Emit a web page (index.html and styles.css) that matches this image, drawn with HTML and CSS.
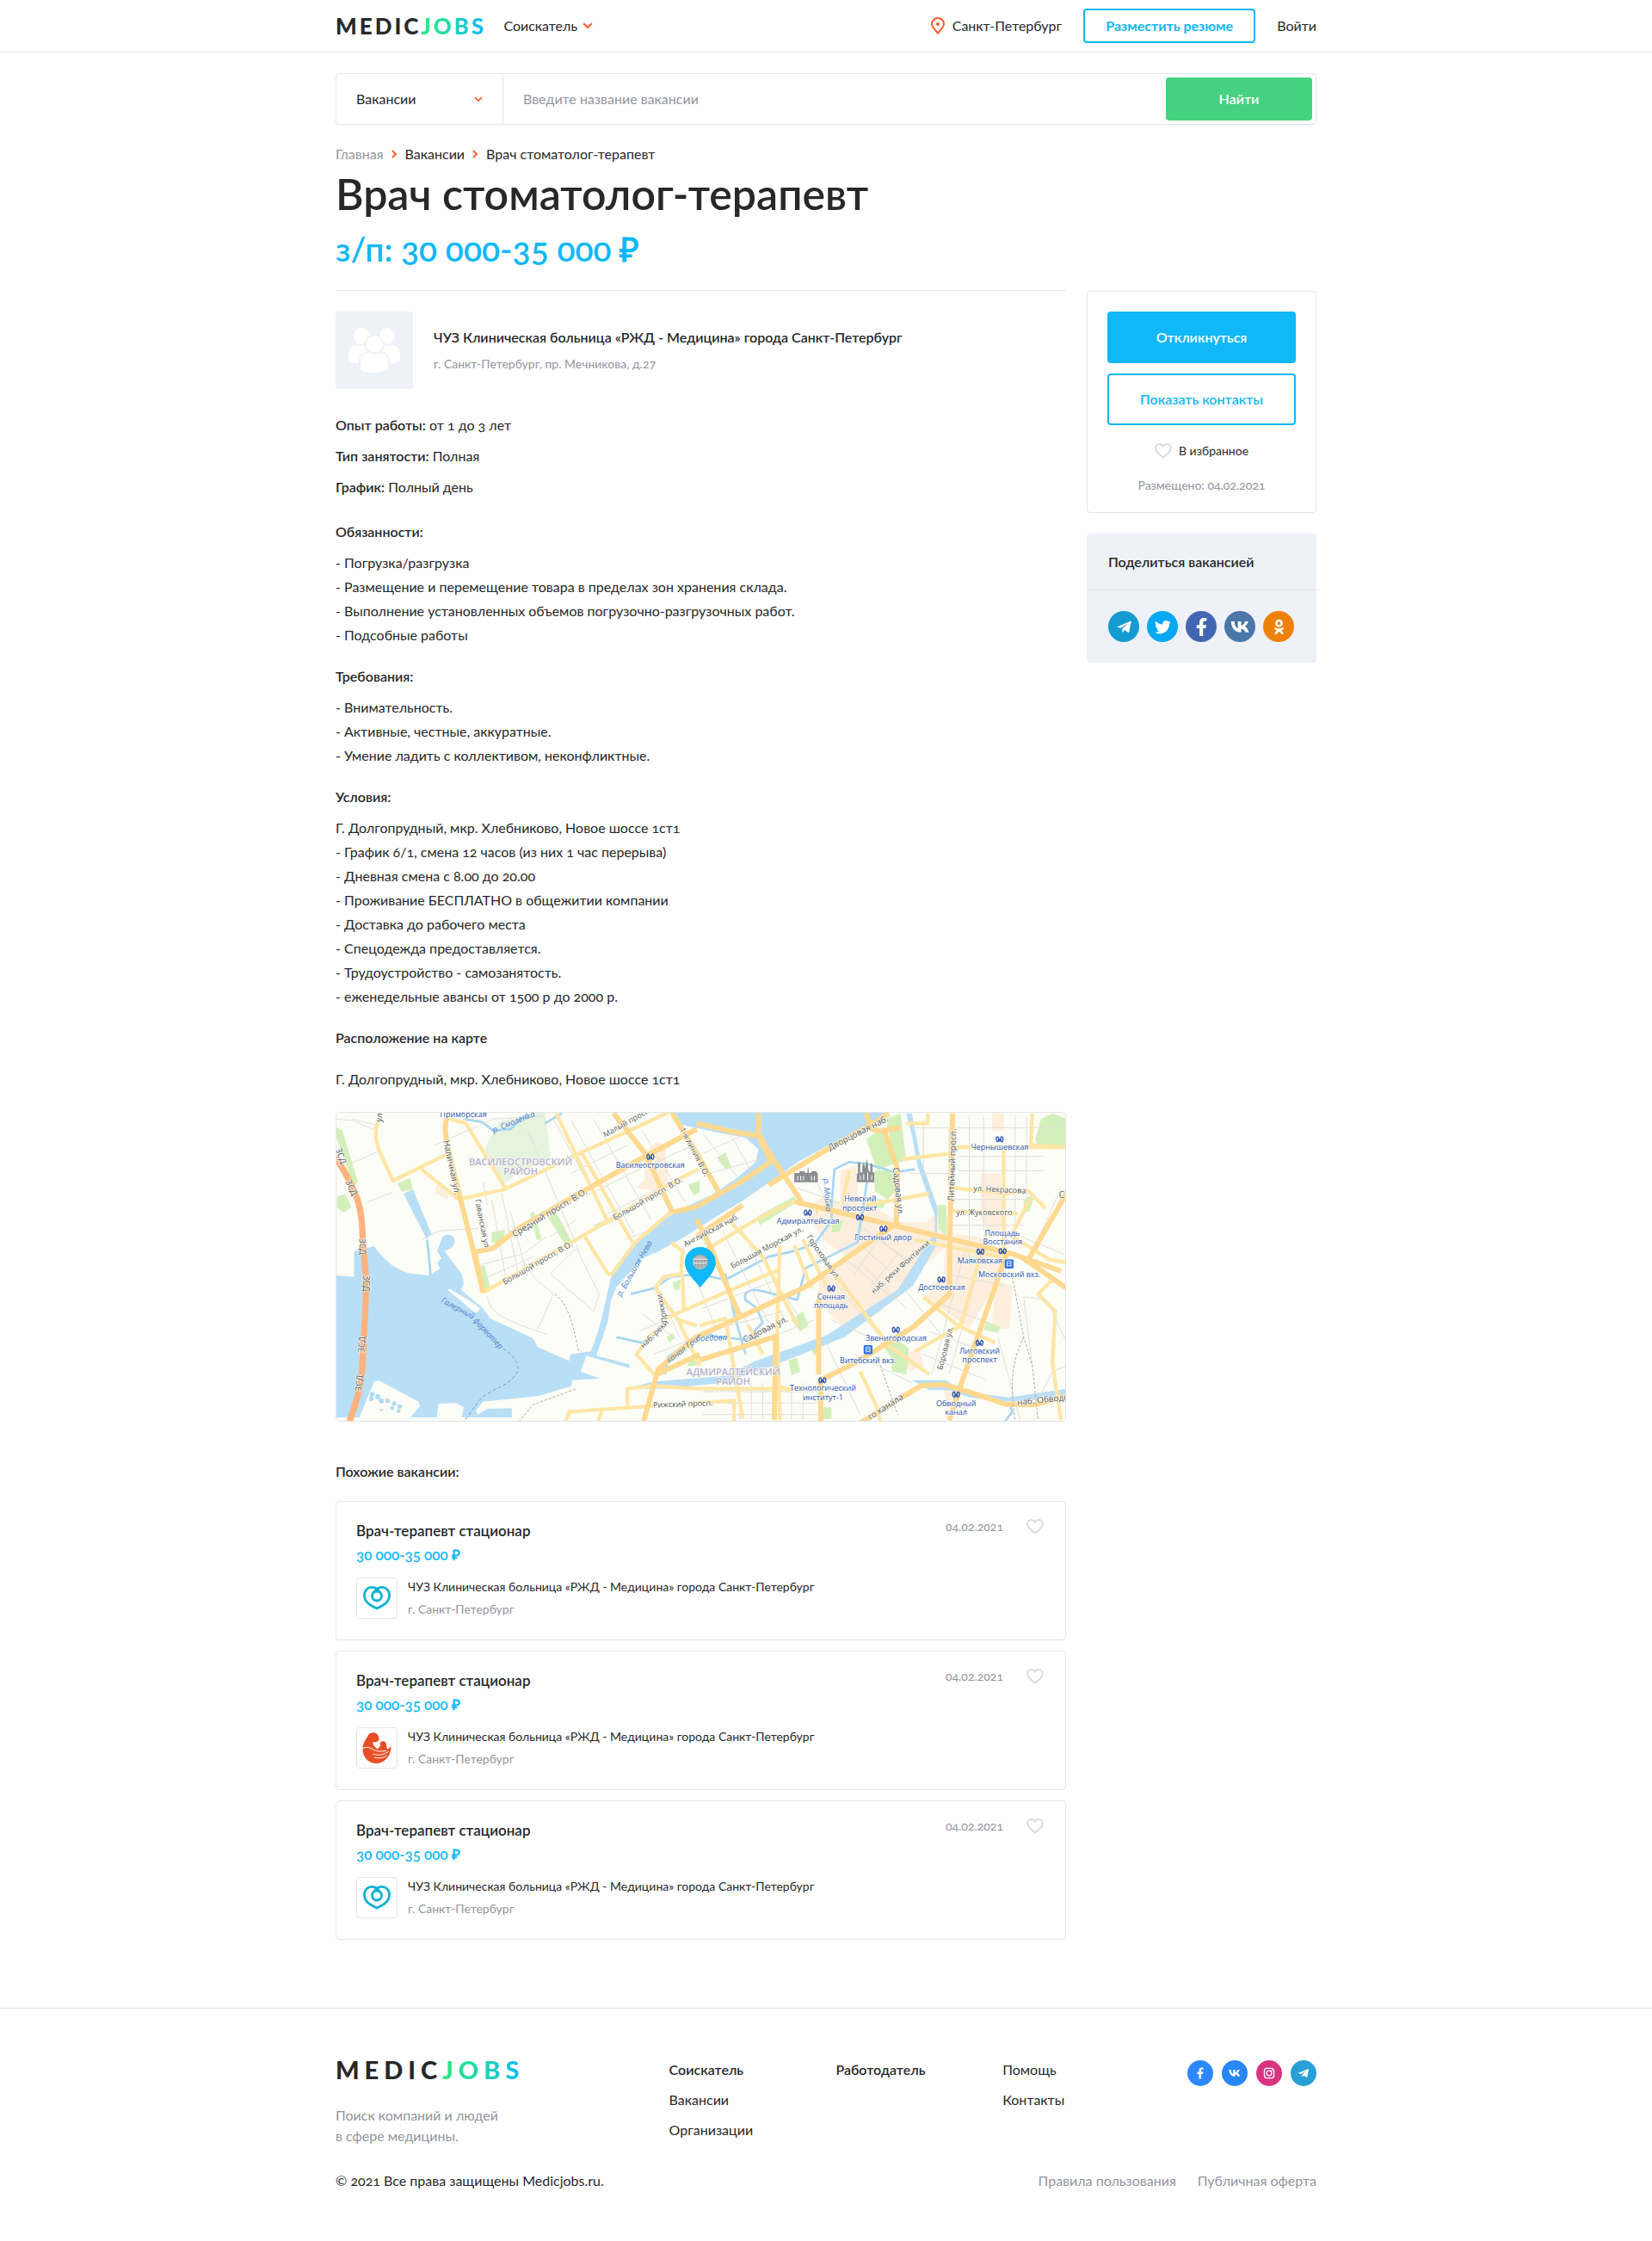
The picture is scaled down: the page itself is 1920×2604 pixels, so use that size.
FILE: index.html
```html
<!DOCTYPE html>
<html lang="ru">
<head>
<meta charset="utf-8">
<meta name="viewport" content="width=device-width, initial-scale=1">
<title>Врач стоматолог-терапевт — MedicJobs</title>
<link rel="stylesheet" href="styles.css">
</head>
<body>
<svg class="sprite" aria-hidden="true">
  <symbol id="chevron" viewBox="0 0 12 8"><path d="M1.2 1.2 6 6l4.800-4.800" fill="none" stroke="currentColor" stroke-width="2"/></symbol>
  <symbol id="heart" viewBox="0 0 20 18"><path d="M10 16.600C7.500 14.500 1 10 1 5.700 1 3 3.100 1 5.500 1 7.400 1 9 2 10 3.800 11 2 12.600 1 14.500 1 16.900 1 19 3 19 5.700c0 4.300-6.500 8.800-9 10.900z" fill="none" stroke="currentColor" stroke-width="2" stroke-linejoin="round"/></symbol>
  <symbol id="plane" viewBox="0 0 24 24"><path d="M2 11.600 21.500 3.500c.6-.2 1 .1.900.8L19.300 19.400c-.2.900-.8 1.100-1.500.700L12.800 16.500l-2.600 2.900c-.5.500-1 .3-1-.5l.2-4.300L18 6.800 7 13.700 2 12.300c-.5-.1-.5-.5 0-.7z" fill="currentColor"/></symbol>
  <symbol id="twitter" viewBox="0 0 24 24"><path d="M23.600 4.900a9.500 9.500 0 0 1-2.700.8 4.800 4.800 0 0 0 2.100-2.700 9.600 9.600 0 0 1-3.100 1.200 4.900 4.900 0 0 0-8.300 4.400A13.700 13.700 0 0 1 1.700 3.600a4.900 4.900 0 0 0 1.500 6.500 4.800 4.800 0 0 1-2.200-.6v.1a4.900 4.900 0 0 0 3.900 4.700 4.900 4.900 0 0 1-2.200.1 4.900 4.900 0 0 0 4.600 3.400A9.800 9.800 0 0 1 0 19.800a13.800 13.800 0 0 0 7.500 2.200c9.100 0 14-7.500 14-14v-.6a10 10 0 0 0 2.100-2.500z" fill="currentColor"/></symbol>
  <symbol id="facebook" viewBox="0 0 24 24"><path d="M9.500 23V13.500H6V9.600h3.500V6.700C9.500 3 11.600 1 14.900 1c1.500 0 2.600.1 3.100.2v3.600h-2.100c-1.700 0-2.100.9-2.100 2.100v2.700h4l-.6 3.900h-3.400V23z" fill="currentColor"/></symbol>
  <symbol id="vk" viewBox="0 0 24 24"><path d="M13.100 18.600C5.400 18.600 1 13.300.8 5.200h4c.1 5.300 2.400 7.900 4.300 8.300V5.200h4v5.100c2-.2 4-2.400 4.700-5.100h3.900c-.6 3-2.800 5.200-4.300 6.200 1.500.8 4 2.700 5 7.200h-4.200c-.8-2.400-2.700-4.300-5.100-4.500v4.500z" fill="currentColor"/></symbol>
  <symbol id="ok" viewBox="0 0 24 24"><g fill="none" stroke="currentColor" stroke-width="3.200" stroke-linecap="round"><circle cx="12" cy="6.500" r="4"/><path d="M6.500 14.200c3.400 2.200 7.600 2.200 11 0M12 16.200l-4.800 5M12 16.200l4.800 5"/></g></symbol>
  <symbol id="instagram" viewBox="0 0 24 24"><g fill="none" stroke="currentColor" stroke-width="2.200"><rect x="2.500" y="2.500" width="19" height="19" rx="5"/><circle cx="12" cy="12" r="5"/></g><circle cx="17.500" cy="6.500" r="1.500" fill="currentColor"/></symbol>
  <symbol id="org-heart" viewBox="0 0 32 28"><g fill="none" stroke="#0eb2d4" stroke-width="2.800"><circle cx="16" cy="11.500" r="5.500"/><path d="M12.500 7.800C14 4.500 17 1.400 22 1.400c4.800 0 8.600 3.700 8.600 8.900C30.600 18 25 22 16 26 7 22 1.400 18 1.400 10.300 1.400 5.100 5.200 1.400 10 1.400c5 0 8 3.100 9.500 6.400"/></g></symbol>
  <symbol id="org-bird" viewBox="0 0 36 36"><path d="M1.500 17C2.500 10.500 6 7.500 7.500 4 9 .5 13-.3 16 .8c2.600 1 3.800 2.500 4.200 4.800l.3 3.400c-1 1.300-2.500 1.300-3.500 2.500l-3-.5c-1 2.500 0 4.500 4.500 8.500 1.700-1.300 3-2.500 3.500-4-.5-2.400-.4-4.300 2-5.100 2.600-.8 5 .8 4.800 3.200l1.200 6c2-.5 3.500-2 4.500-4C35 27 27 36 17 36 7 36 .5 27 1.500 17z" fill="#e84e25"/><path d="M1 19c4-2.500 8-2 12 .5 5 2.800 10 3.300 16 1.500M13 25c7 2.500 13 1 19-3M15 29c6 1.500 11 .5 15-2" fill="none" stroke="#fff" stroke-width="1"/></symbol>
  <symbol id="metro" viewBox="0 0 34 26"><path d="M10 23C3 17 3 4 11 3.500L17 17 23 3.500C31 4 31 17 24 23M13 22l-1-9M21 22l1-9" fill="none" stroke="#2c53b8" stroke-width="4"/></symbol>
  <symbol id="train" viewBox="0 0 32 32"><rect width="32" height="32" rx="6" fill="#2f74ea"/><path d="M9 7h14v15H9zM11 14h10M9 26l3-4M23 26l-3-4" fill="none" stroke="#fff" stroke-width="2.500"/></symbol>
</svg>

<header class="header">
  <div class="container header-row">
    <a class="logo" href="#">MEDIC<span class="logo-accent">JOBS</span></a>
    <button class="role" type="button">Соискатель <svg class="chevron"><use href="#chevron"/></svg></button>
    <a class="city" href="#"><svg class="city-pin" viewBox="0 0 16 20"><path d="M8 18.600C6 16 1 11.500 1 7.800a7 6.800 0 0 1 14 0c0 3.700-5 8.200-7 10.800z" fill="none" stroke="currentColor" stroke-width="2"/><circle cx="8" cy="8" r="2" fill="currentColor"/></svg>Санкт-Петербург</a>
    <a class="btn btn-outline btn-resume" href="#">Разместить резюме</a>
    <a href="#">Войти</a>
  </div>
</header>

<main class="container">
  <form class="search">
    <div class="search-type">
      <select aria-label="Раздел поиска"><option>Вакансии</option></select>
      <svg class="chevron chevron-small"><use href="#chevron"/></svg>
    </div>
    <input type="text" aria-label="Название вакансии" placeholder="Введите название вакансии">
    <button class="btn search-submit" type="submit">Найти</button>
  </form>

  <nav class="crumbs" aria-label="Навигация">
    <a class="muted" href="#">Главная</a>
    <svg class="crumb-arrow" viewBox="0 0 7 10"><path d="M1 1l4 4-4 4" fill="none" stroke="currentColor" stroke-width="2"/></svg>
    <a href="#">Вакансии</a>
    <svg class="crumb-arrow" viewBox="0 0 7 10"><path d="M1 1l4 4-4 4" fill="none" stroke="currentColor" stroke-width="2"/></svg>
    <span>Врач стоматолог-терапевт</span>
  </nav>

  <h1>Врач стоматолог-терапевт</h1>
  <p class="salary">з/п: 30 000-35 000 ₽</p>

  <div class="layout">
    <div class="content">
      <div class="company">
        <svg class="company-logo" viewBox="0 0 90 90"><g fill="#fff" stroke="#eef1f7" stroke-width="2"><path d="M14 58V50c0-8 5-12 11-12h10c6 0 10 4 10 12v11H30c-8 0-13-1-16-3zM76 58V50c0-8-5-12-11-12H55c-6 0-10 4-10 12v11h15c8 0 13-1 16-3z"/><ellipse cx="30" cy="28.500" rx="10" ry="10.500"/><ellipse cx="60" cy="28.500" rx="10" ry="10.500"/><path d="M28 68V59c0-8 5-12 12-12h10c7 0 12 4 12 12v9c-4 3-10 4-17 4s-13-1-17-4z"/><ellipse cx="45" cy="38" rx="10.500" ry="10.500"/></g></svg>
        <div class="company-text">
          <h2>ЧУЗ Клиническая больница «РЖД - Медицина» города Санкт-Петербург</h2>
          <p class="small muted">г. Санкт-Петербург, пр. Мечникова, д.27</p>
        </div>
      </div>

      <ul class="facts">
        <li><b>Опыт работы:</b> от 1 до 3 лет</li>
        <li><b>Тип занятости:</b> Полная</li>
        <li><b>График:</b> Полный день</li>
      </ul>

      <h3>Обязанности:</h3>
      <ul>
        <li>- Погрузка/разгрузка</li>
        <li>- Размещение и перемещение товара в пределах зон хранения склада.</li>
        <li>- Выполнение установленных объемов погрузочно-разгрузочных работ.</li>
        <li>- Подсобные работы</li>
      </ul>
      <h3>Требования:</h3>
      <ul>
        <li>- Внимательность.</li>
        <li>- Активные, честные, аккуратные.</li>
        <li>- Умение ладить с коллективом, неконфликтные.</li>
      </ul>
      <h3>Условия:</h3>
      <ul>
        <li>Г. Долгопрудный, мкр. Хлебниково, Новое шоссе 1ст1</li>
        <li>- График 6/1, смена 12 часов (из них 1 час перерыва)</li>
        <li>- Дневная смена с 8.00 до 20.00</li>
        <li>- Проживание БЕСПЛАТНО в общежитии компании</li>
        <li>- Доставка до рабочего места</li>
        <li>- Спецодежда предоставляется.</li>
        <li>- Трудоустройство - самозанятость.</li>
        <li>- еженедельные авансы от 1500 р до 2000 р.</li>
      </ul>
      <h3>Расположение на карте</h3>
      <p class="address">Г. Долгопрудный, мкр. Хлебниково, Новое шоссе 1ст1</p>

      <svg class="map" viewBox="32 38 2544 1074" preserveAspectRatio="xMidYMid slice" role="img" aria-label="Карта района">
        <rect x="0" y="0" width="2620" height="1200" fill="#fbfdf6"/>
        <g fill="#fdeedd">
          <path d="M1100 180l50-40 30 10 10 130-40 30-70-10 30-30zM380 290l50 20-10 30-40-20zM1790 240l60-20 0 100 140 100 100 0 60-60 40 120-70 60-100 90-90 100-90 60-70-30-60-80 10-80 90-60-80-60-60-100 60-50 60 20zM2280 250l70 0 10 180-40 40-40-60zM2320 40h40v60h-40zM2160 460l110 10 110 60-30 80-110 180-150-110 60-80zM2330 620l60 20-10 150-60 0zM2010 870l60 0 10 50-50 20zM2150 990l60 10-10 40-40 0z"/>
        </g>
        <g fill="#d3f0bb">
          <path d="M34 90l20 10 55 180-15 15-60-170zM36 330l30-8 20 45-28 20-22-20zM245 285l45-20 10 40-40 8zM575 455l45-10 0 50-45-5zM708 390l15-8 25 95-15 5zM770 400l30-15 55 105-20 15zM525 575l25-5 20 75-25 10zM930 430l60-25 10 10-60 30zM1205 630l30-10-5 35-20 0zM1185 820l20-15 10 15-20 20zM1260 290l40-15v40l-20 10zM1260 905l40-8v20l-40 5zM1360 195l30-20 20 50-20 10zM1540 130l20 5 10 30-20 30zM1500 400l130-70 10 20-130 80zM1880 130l60-40 50 120-70 30zM1950 60l50-20 20 160-40 20zM2470 130l20-70 40-20 50 20v90l-100 5zM1910 240l60 0 15 70-30 30-45-30zM1900 340l50 0-10 30-40 0zM1620 760l40-30 20 50-30 20zM1940 850l40-30 50 40-10 50-40 0zM1970 900l60 0-10 50-50-10zM2430 340l40-20-20 60-20 10zM1610 900l30-8 10 50-30 10zM1680 840l40-5 0 40-20 10zM2130 360l30 0 0 110-25-30zM2300 765l50 20-10 20-50-10zM1730 1065l30 0 0 40-30 0zM1760 430l40-20-10 40-30 5z"/>
          <path d="M600 70l160-40 20 160-170 95-60-120z" fill="#e6f3df"/>
        </g>
        <g fill="#b9dff6">
          <path d="M20 605l75 5v-90l70-17c35 50 75 85 135 97l60 5 35-25-10-20 15-15-15-25 15-40c5-25 45-20 46 5-2 25-25 30-36 35l60 80 8 32-10 23 77 65 25 35 150 70 15 30 110 48 5-23 70-10c40-95 50-175 70-255 50-95 100-160 170-195l80-50 100-45 90-60 65-55 10-45-45-40-110-20-110-25-60-60h800l-40 35-160 80-130 70-100 70-100 70-100 60-110 70-90 50-50 20-90 100-20 50-10 70-40 120 115 30v13l-150-43-20 55 70 25-100 5-15 130H20z"/>
          <path d="M268 320l32-15 65 155-17 18-68-133zM1040 1000l100-25 250-20 100-50 250-90 250-160 130-200 0-60-60-170-20-110-20-75h20l30 160 60 170-5 130-80 140-240 180-250 100-180 60-200 20zM2040 970l120 0 60 40 160 20 100-15 100-15v20l-120 20-100 5-120-15-70-25h-70z"/>
        </g>
        <g fill="none" stroke="#a9d6f2" stroke-width="9" stroke-linejoin="round">
          <path d="M350 480l12 125M480 60l60 10 40 30 60-5 60-55M760 75l60-35M1060 670l80-20 60-40 90-10 100 20 150-80 90-20 70-25 60-80 0-60 10-120 50-25 60 5 100 30 70-10M1390 600l30 140 40 140M1460 830l60-60-20-50-40-30c-10-30 20-40 60-30l120 30 30-110 60-30 120-60 40-250M1180 950l10-60 110-80 160 20M1010 820l90 20 60-40M2380 1050l10 30-30 40" stroke-width="8"/>
        </g>
        <g fill="#fbfdf6">
          <path d="M105 1120l60-145 15-5 140 75 5 15-50 60zM380 1120l10-68 60-2 28 15-13 55zM645 1120v-52l-85 2-35 20-5-15 25-30 195-20 130-40-5 135zM420 655l10-3 90 55 15 15-15 15z"/>
        </g>
        <g fill="#b2dcf5"><circle cx="158" cy="1020" r="9"/><circle cx="178" cy="1028" r="9"/><circle cx="155" cy="1035" r="8"/><circle cx="190" cy="1042" r="9"/><circle cx="212" cy="1042" r="8"/><circle cx="235" cy="1052" r="8"/><circle cx="254" cy="1062" r="8"/><circle cx="228" cy="1068" r="7"/><circle cx="250" cy="1078" r="7"/><circle cx="190" cy="1074" r="5"/></g>
        <g fill="none" stroke="#dedfdc" stroke-width="3">
          <path d="M32 60l60 5 80 35M90 60l80 20M85 215l90-40M140 350l90-35M330 480l60-30 140-10M380 150l200-90 180-10M545 280l15 80M575 340l50 280M610 320l60 290M640 380l60 230M525 570l160-40 80-60M540 620l180-80M690 560l40 60 60 50-55 125M870 510l80 160-20 60-150-130 90-90M560 680c10 60 60 80 205 130M700 100l180 420M790 60l200 370M850 60l220 400M930 60l200 350M1100 100l150 250M850 250l200-100M900 330l200-100 180-80M960 400l300-150M1040 480l160-60M780 470l90-60"/>
          <path d="M1100 740l120 90M1150 640l80 180M1090 800l200-90M1140 880l150-60M1240 500l120 300M1310 480l160 300M1380 450l160 320M1440 430l160 340M1310 720l260-100M1330 800l260-70M1400 880l300-120M1310 110l160 200M1400 100l100 180M1310 180l200-90M1330 250l220-60M1310 1010h400M1310 1050h400M1310 1090h400M1440 980v130M1480 980v130M1520 980v130M1620 980v130M1660 980v130"/>
          <path d="M1840 480l200 180M1800 540l180 150M1870 440l180 130M1930 480l130 110M1900 640l90-110M1840 600l90-130M1780 640l200 240M1860 560l160 160M2020 660l160 200M1760 760l220 100M1740 840l120 250M1840 880l200 100M2030 90h140v160h-140M2080 60v180M2200 90h380M2200 190h300M2200 240h300M2240 50v500M2290 50v400M2400 50v380M2440 50v300M2180 340h250M2180 430h250M2160 600l200 40M2130 700l200 80M2230 500l-120 450M2280 550l-110 400M2430 680l80 10 70 150M2430 680l30 240M2490 1020l40-80 50-20M2100 800l220 80M2080 880l220 90M2480 480l80-180M2420 470l150 60M1640 300l200 70M1700 260l60 130M1560 620l100 150M2340 820l80 300"/>
        </g>
        <g fill="none" stroke="#ffe6a6" stroke-width="13" stroke-linejoin="round">
          <path d="M185 40l-15 60c0 60 20 80 60 175l195-95M330 235l130 105 160-35 260-125 240-110 170-80M430 60l55 15 140 230M800 40l180 380M885 170l180 320M545 665l350-200 340-200 60-30M900 470l80 130h15l80-110 130-110M520 520l25 145M1145 650l80 110 65 20M1145 650l30-40 60-10 5-80-40-30M1240 600l5 130M1140 950l-60-70 60-80M830 1120l15-40 300-20M960 1075l-15 40M1048 1065v-65l90-10 150 10h400M1180 755l300-130 100-40M1220 750l80 170M1300 780l90-25 60 350M1580 500l-10 280 10 330M1290 535l200-120 140-70M1400 410l120 130 120 240M1470 780l50 100M1660 480l80 160M1630 500l60 150M2020 75l75 0v-35M2005 200l170-20M2460 40l-5 110 125 8h-400M2360 160v350M2185 300l180 20 80-10 60 60M2100 320l-220 40M2050 480l300 60M2170 380l240 10M1780 610l180 240 140 100M2080 680l120 100 130 60M2050 870l160-90 90-320M1860 940l60 130 10 50M1270 1050l150-8v70M2450 340l-60 120M2390 470l130 80 60 10M2530 620l-50 50 60 60-10 180 30 200M1620 1010l-40-20M1820 240l-20 110"/>
        </g>
        <g fill="none" stroke="#ffd990" stroke-width="18" stroke-linejoin="round">
          <path d="M420 55c-15 30-5 80 20 180l70 280 35 150M510 525l70-15 90-70 200-115 240-135 180-95M1000 40l110 140 95 205M1205 385l85-20 160-90 90-60 10-40M1205 40l30 50 55 90 80 140M1290 75l130 30 90 15 40 70 100 150-10 10 250 60 500 120 170 60M1545 200l-40-80 0-80M1540 290l180-110 160-90 80-50M1880 40l20 55 45 10 45 130-5 190M1940 100l60-10M1450 360l-30 20-130 90M1290 410l50 100 100 240M1710 380l-5 0M1105 1112l50-180 130-110 380-175 330-230M1150 950l150-70M1300 900l260-80M1565 810l-5 300M2182 40l-10 450v180l-120 110-210 130-120 60v150M1715 690v260M2370 530l-150 430-50 150M2170 670l-120 110M1860 1120l210-130 80-5 100 30 120 40 100 0 150-40M2590 300l-150 260M2420 540l160 110"/>
        </g>
        <path d="M30 190C110 320 125 370 125 480l13 150-5 120-10 190c-3 50-15 90-45 180" fill="none" stroke="#ffb27e" stroke-width="22"/>
        <g fill="none" stroke="#aaa" stroke-width="3" stroke-dasharray="9 6"><path d="M795 670c50 40 60 100 85 205M670 1115l50-60 150-55M1920 890l70 200M2390 610l40 210 30 100 20 190M2430 820c-40 80-50 160-30 290"/></g>
        <path d="M615 860c30 20 60 50 50 80-30 60-110 60-140 110l-50 70" fill="none" stroke="#6d9ad6" stroke-width="3" stroke-dasharray="12 8"/>
        <g fill="#8b8d90">
          <path d="M1630 280v-32h18v-6h18v5h10v-9l2-12 2 12v9h10v-5h18v6h4v32zM1848 280v-30h4v-34l4-8 4 8v30h7v-22l5-12 4 12v10l4-20 3-14 3 14 4 30h5v-24l4-8 4 8v26h6v34z"/>
          <path d="M1642 258v16M1652 258v16M1662 258v16M1690 258v16M1700 258v16M1860 256v16M1872 252v20M1886 246v28M1900 256v16" stroke="#fff" stroke-width="3"/>
        </g>
        <g class="map-district"><text x="676" y="220">ВАСИЛЕОСТРОВСКИЙ</text><text x="676" y="255">РАЙОН</text><text x="1417" y="952">АДМИРАЛТЕЙСКИЙ</text><text x="1417" y="987">РАЙОН</text></g>
        <g class="map-street">
          <text transform="translate(190 72) rotate(-80)">ул.</text>
          <text transform="translate(30 165) rotate(70)">ЗСД</text>
          <text transform="translate(64 278) rotate(64)">ЗСД</text>
          <text transform="translate(113 476) rotate(88)">ЗСД</text>
          <text transform="translate(126 604) rotate(90)">ЗСД</text>
          <text transform="translate(130 875) rotate(-86)">ЗСД</text>
          <text transform="translate(120 1010) rotate(-84)">ЗСД</text>
          <text transform="translate(406 136) rotate(78)">Наличная ул.</text>
          <text class="map-minor" transform="translate(517 342) rotate(79)">Гаванская ул.</text>
          <text transform="translate(654 472) rotate(-31)">Средний просп. В.О.</text>
          <text class="map-minor" transform="translate(620 638) rotate(-30)">Большой просп. В.О.</text>
          <text class="map-minor" transform="translate(1004 414) rotate(-30)">Большой просп. В.О.</text>
          <text class="map-minor" transform="translate(970 124) rotate(-29)">Малый просп.</text>
          <text class="map-minor" transform="translate(1230 96) rotate(62)">1-я линия В.О.</text>
          <text class="map-minor" transform="translate(1250 506) rotate(-28)">Английская наб.</text>
          <text class="map-minor" transform="translate(1414 582) rotate(-28)">Большая Морская ул.</text>
          <text class="map-minor" transform="translate(1672 472) rotate(55)">Гороховая ул.</text>
          <text transform="translate(1754 170) rotate(-27)">Дворцовая наб.</text>
          <text transform="translate(1974 230) rotate(84)">Садовая ул.</text>
          <text transform="translate(1458 840) rotate(-27)">Садовая ул.</text>
          <text transform="translate(2186 348) rotate(-88)">Литейный просп.</text>
          <text class="map-minor" transform="translate(2254 310) rotate(3)">ул. Некрасова</text>
          <text class="map-minor" transform="translate(2194 396)">ул. Жуковского</text>
          <text class="map-minor" transform="translate(1908 670) rotate(-42)">наб. реки Фонтанки</text>
          <text class="map-minor" transform="translate(1104 860) rotate(-45)">наб. реки</text>
          <text class="map-minor" transform="translate(1188 768) rotate(-102)">Пряжки</text>
          <text class="map-minor" transform="translate(2146 936) rotate(-76)">Боровая ул.</text>
          <text class="map-minor" transform="translate(1138 1066) rotate(-2)">Рижский просп.</text>
          <text transform="translate(1894 1110) rotate(-33)">го канала</text>
          <text transform="translate(2408 1058) rotate(-6)">наб. Обводн</text>
          <text transform="translate(2553 336)">С</text>
        </g>
        <g class="map-water">
          <text transform="translate(582 108) rotate(-22)">р. Смоленка</text>
          <text transform="translate(396 698) rotate(28)">Галерный</text>
          <text transform="translate(510 764) rotate(47)">фарватер</text>
          <text transform="translate(1026 680) rotate(-60)">р. Большая Нева</text>
          <text transform="translate(1732 268) rotate(86)">р. Мойка</text>
          <text transform="translate(1194 912) rotate(-38)">канал Гри</text>
          <text transform="translate(1288 834) rotate(-2)">боедова</text>
        </g>
        <g class="map-station">
          <text x="476" y="54">Приморская</text>
          <text x="1128" y="230">Василеостровская</text>
          <text x="1678" y="424">Адмиралтейская</text>
          <text x="1860" y="348">Невский</text><text x="1858" y="379">проспект</text>
          <text x="1940" y="481">Гостиный двор</text>
          <text x="2346" y="168">Чернышевская</text>
          <text x="2355" y="467">Площадь</text><text x="2356" y="498">Восстания</text>
          <text x="2277" y="563">Маяковская</text>
          <text x="2380" y="610">Московский вкз.</text>
          <text x="2144" y="657">Достоевская</text>
          <text x="1758" y="688">Сенная</text><text x="1758" y="719">площадь</text>
          <text x="1985" y="832">Звенигородская</text>
          <text x="1887" y="910">Витебский вкз.</text>
          <text x="2276" y="877">Лиговский</text><text x="2276" y="909">проспект</text>
          <text x="1730" y="1008">Технологический</text><text x="1730" y="1039">институт-1</text>
          <text x="2194" y="1060">Обводный</text><text x="2194" y="1091">канал</text>
        </g>
        <g>
          <use href="#metro" x="1111" y="179" width="34" height="26"/>
          <use href="#metro" x="1660" y="374" width="34" height="26"/>
          <use href="#metro" x="1842" y="390" width="34" height="26"/>
          <use href="#metro" x="1924" y="430" width="34" height="26"/>
          <use href="#metro" x="2329" y="118" width="34" height="26"/>
          <use href="#metro" x="2262" y="510" width="34" height="26"/>
          <use href="#metro" x="2339" y="508" width="34" height="26"/>
          <use href="#metro" x="2126" y="607" width="34" height="26"/>
          <use href="#metro" x="1742" y="638" width="34" height="26"/>
          <use href="#metro" x="1967" y="782" width="34" height="26"/>
          <use href="#metro" x="2259" y="828" width="34" height="26"/>
          <use href="#metro" x="1711" y="958" width="34" height="26"/>
          <use href="#metro" x="2177" y="1008" width="34" height="26"/>
          <use href="#train" x="2363" y="549" width="32" height="32"/>
          <use href="#train" x="1871" y="848" width="32" height="32"/>
        </g>
        <path d="M1302 648c-14-20-54-54-54-88a54 54 0 0 1 108 0c0 34-40 68-54 88z" fill="#11b8f7"/>
        <circle cx="1302" cy="558" r="26" fill="#b8babb"/>
        <path d="M1276 552h52M1279 544c12-12 34-12 46 0M1281 566h44M1286 552v22M1296 552v26M1308 552v26M1318 552v22" fill="none" stroke="#8b8d8f" stroke-width="2"/>
        <path d="M1277 549h50M1280 563h44" stroke="#f2f2f2" stroke-width="3"/>
      </svg>

      <h3 class="similar-title">Похожие вакансии:</h3>
      <div class="similar">
        <article class="job">
          <div class="job-head">
            <div><h4><a href="#">Врач-терапевт стационар</a></h4><p class="job-salary">30 000-35 000 ₽</p></div>
            <div class="job-side"><time datetime="2021-02-04">04.02.2021</time><button class="like" type="button" aria-label="В избранное"><svg class="heart"><use href="#heart"/></svg></button></div>
          </div>
          <div class="job-org"><span class="org-logo"><svg width="32" height="28"><use href="#org-heart"/></svg></span><div><p>ЧУЗ Клиническая больница «РЖД - Медицина» города Санкт-Петербург</p><p class="muted">г. Санкт-Петербург</p></div></div>
        </article>
        <article class="job">
          <div class="job-head">
            <div><h4><a href="#">Врач-терапевт стационар</a></h4><p class="job-salary">30 000-35 000 ₽</p></div>
            <div class="job-side"><time datetime="2021-02-04">04.02.2021</time><button class="like" type="button" aria-label="В избранное"><svg class="heart"><use href="#heart"/></svg></button></div>
          </div>
          <div class="job-org"><span class="org-logo"><svg width="36" height="36"><use href="#org-bird"/></svg></span><div><p>ЧУЗ Клиническая больница «РЖД - Медицина» города Санкт-Петербург</p><p class="muted">г. Санкт-Петербург</p></div></div>
        </article>
        <article class="job">
          <div class="job-head">
            <div><h4><a href="#">Врач-терапевт стационар</a></h4><p class="job-salary">30 000-35 000 ₽</p></div>
            <div class="job-side"><time datetime="2021-02-04">04.02.2021</time><button class="like" type="button" aria-label="В избранное"><svg class="heart"><use href="#heart"/></svg></button></div>
          </div>
          <div class="job-org"><span class="org-logo"><svg width="32" height="28"><use href="#org-heart"/></svg></span><div><p>ЧУЗ Клиническая больница «РЖД - Медицина» города Санкт-Петербург</p><p class="muted">г. Санкт-Петербург</p></div></div>
        </article>
      </div>
    </div>

    <aside>
      <div class="actions">
        <button class="btn btn-primary" type="button">Откликнуться</button>
        <button class="btn btn-outline" type="button">Показать контакты</button>
        <button class="favorite" type="button"><svg class="heart"><use href="#heart"/></svg>В избранное</button>
        <p class="posted muted">Размещено: 04.02.2021</p>
      </div>
      <div class="share">
        <h3>Поделиться вакансией</h3>
        <div class="share-links">
          <a class="round telegram" href="#" aria-label="Telegram"><svg><use href="#plane"/></svg></a>
          <a class="round twitter" href="#" aria-label="Twitter"><svg><use href="#twitter"/></svg></a>
          <a class="round facebook" href="#" aria-label="Facebook"><svg class="big"><use href="#facebook"/></svg></a>
          <a class="round vk" href="#" aria-label="ВКонтакте"><svg class="big"><use href="#vk"/></svg></a>
          <a class="round ok" href="#" aria-label="Одноклассники"><svg><use href="#ok"/></svg></a>
        </div>
      </div>
    </aside>
  </div>
</main>

<footer class="footer">
  <div class="container">
    <div class="footer-grid">
      <div>
        <a class="logo logo-large" href="#">MEDIC<span class="logo-accent">JOBS</span></a>
        <p class="tagline muted">Поиск компаний и людей<br>в сфере медицины.</p>
      </div>
      <ul>
        <li><b>Соискатель</b></li>
        <li><a href="#">Вакансии</a></li>
        <li><a href="#">Организации</a></li>
      </ul>
      <ul>
        <li><b>Работодатель</b></li>
      </ul>
      <ul>
        <li><a href="#">Помощь</a></li>
        <li><a href="#">Контакты</a></li>
      </ul>
      <div class="social">
        <a class="round fb-blue" href="#" aria-label="Facebook"><svg><use href="#facebook"/></svg></a>
        <a class="round vk-blue" href="#" aria-label="ВКонтакте"><svg><use href="#vk"/></svg></a>
        <a class="round insta" href="#" aria-label="Instagram"><svg><use href="#instagram"/></svg></a>
        <a class="round tg-blue" href="#" aria-label="Telegram"><svg><use href="#plane"/></svg></a>
      </div>
    </div>
    <div class="footer-bottom">
      <p>© 2021 Все права защищены Medicjobs.ru.</p>
      <nav class="legal muted"><a href="#">Правила пользования</a><a href="#">Публичная оферта</a></nav>
    </div>
  </div>
</footer>
</body>
</html>
```
FILE: styles.css
```css
*, *::before, *::after { box-sizing: border-box; }
body {
  margin: 0;
  background: #fff;
  color: #27282a;
  font: 16px/24px Lato, "Open Sans", sans-serif;
  font-variant-numeric: oldstyle-nums;
}
h1, h2, h3, h4, p, ul { margin: 0; padding: 0; }
ul { list-style: none; }
h2, h3, h4, b { font-size: 16px; font-weight: 600; }
a { color: inherit; text-decoration: none; }
button, input, select { font: inherit; color: inherit; }
button { padding: 0; border: 0; background: none; cursor: pointer; }
svg { display: block; flex: none; }
.sprite { position: absolute; width: 0; height: 0; }
.container { max-width: 1188px; margin: 0 auto; padding: 0 24px; }
.muted { color: #92959e; }

.btn {
  display: flex;
  align-items: center;
  justify-content: center;
  border-radius: 4px;
  font-weight: 600;
}
.btn-primary { background: #11b8f7; color: #fff; }
.btn-outline { border: 2px solid #11b8f7; background: #fff; color: #11b8f7; }

/* Header */
.header { border-bottom: 1px solid #e3e5e8; }
.header-row { display: flex; align-items: center; height: 60px; }
.logo { display: flex; width: fit-content; font-size: 26px; line-height: 22px; font-weight: 900; letter-spacing: 3px; }
.logo-accent {
  background: linear-gradient(90deg, #2be77e, #1fdba8 40%, #11b8f7);
  background-clip: text;
  -webkit-background-clip: text;
  color: transparent;
}
.logo-large { font-size: 29px; letter-spacing: 6px; }
.role { display: flex; align-items: center; gap: 6px; margin-left: 20px; }
.chevron { width: 12px; height: 8px; color: #f8602b; }
.chevron-small { width: 10px; height: 7px; }
.city { display: flex; align-items: center; gap: 9px; margin-left: auto; }
.city-pin { width: 16px; height: 20px; color: #f8602b; }
.btn-resume { width: 200px; height: 40px; margin: 0 25px; font-weight: 700; }

/* Search */
.search { display: flex; height: 60px; margin-top: 24px; border: 1px solid #e3e5e8; border-radius: 4px; }
.search-type { position: relative; flex: 0 0 194px; border-right: 1px solid #e3e5e8; }
.search-type select { width: 100%; height: 100%; padding: 0 23px; border: 0; background: none; appearance: none; }
.search-type .chevron { position: absolute; right: 23px; top: 26px; pointer-events: none; }
.search input { flex: 1; min-width: 0; padding: 0 23px; border: 0; background: none; }
.search input::placeholder { color: #92959e; }
.search-submit { width: 170px; margin: 4px; background: #45d280; color: #fff; }

/* Title */
.crumbs { display: flex; flex-wrap: wrap; align-items: center; gap: 9px; margin-top: 22px; }
.crumb-arrow { width: 7px; height: 10px; color: #f8602b; }
h1 { margin-top: 4px; font-size: 50px; line-height: 60px; font-weight: 600; }
.salary { margin-top: 11px; color: #11b8f7; font-size: 39px; line-height: 46px; font-weight: 600; }

/* Vacancy */
.layout { display: grid; grid-template-columns: minmax(0, 1fr) 267px; align-items: start; gap: 24px; margin-top: 25px; padding-bottom: 79px; }
.content { padding-top: 24px; border-top: 1px solid #e3e5e8; line-height: 28px; }
.company { display: flex; align-items: center; gap: 24px; }
.company-logo { width: 90px; height: 90px; border-radius: 4px; background: #eef1f7; }
.company-text { line-height: 31px; }
.small { font-size: 14px; }
.facts { margin-top: 24px; line-height: 36px; }
.content h3 { margin: 20px 0 8px; }
.content .address { margin-top: 20px; }
.map { width: 100%; height: 360px; margin-top: 24px; border: 1px solid #e3e5e8; border-radius: 4px; }
.map text { font-family: "Open Sans", "Noto Sans", sans-serif; font-variant-numeric: lining-nums; paint-order: stroke; stroke: #fbfdf6; stroke-width: 4px; stroke-linejoin: round; }
.map-district { fill: #b5b0cf; font-size: 33px; font-weight: 600; text-anchor: middle; }
.map-street { fill: #57585a; font-size: 30px; }
.map-minor { font-size: 27px; }
.map-water { fill: #4a80cc; font-size: 28px; font-style: italic; }
.map-water text { stroke: none; }
.map-station { fill: #2c53b8; font-size: 27px; text-anchor: middle; }

/* Similar vacancies */
.content .similar-title { margin: 44px 0 20px; }
.similar { display: grid; gap: 12px; }
.job { padding: 20px 23px 24px; border: 1px solid #e3e5e8; border-radius: 4px; }
.job-head { display: flex; justify-content: space-between; }
.job h4, .job-salary { font-size: 17px; font-weight: 600; }
.job-salary { color: #11b8f7; }
.job-side { display: flex; align-items: center; gap: 27px; height: 18px; color: #92959e; font-size: 14px; }
.heart { width: 20px; height: 18px; color: #dadbdd; }
.like { margin-right: 2px; }
.job-org { display: flex; align-items: center; gap: 12px; height: 48px; margin-top: 12px; font-size: 14px; line-height: 26px; }
.org-logo { display: flex; align-items: center; justify-content: center; width: 48px; height: 48px; border: 1px solid #e3e5e8; border-radius: 4px; }

/* Sidebar */
aside { padding-top: 1px; }
.actions { padding: 23px 23px 19px; border: 1px solid #e3e5e8; border-radius: 4px; text-align: center; }
.actions .btn { width: 100%; height: 60px; }
.actions .btn + .btn { margin-top: 12px; }
.favorite { display: flex; align-items: center; gap: 8px; margin: 18px auto 16px; font-size: 14px; line-height: 24px; }
.posted { font-size: 14px; }
.share { margin-top: 24px; border-radius: 4px; background: #eef1f7; }
.share h3 { padding: 20px 25px; border-bottom: 1px solid #e3e5e8; line-height: 25px; }
.share-links { display: flex; gap: 9px; padding: 24px 25px; }
.round { display: flex; align-items: center; justify-content: center; width: 36px; height: 36px; border-radius: 50%; color: #fff; }
.round svg { width: 19px; height: 19px; }
.round .big { width: 23px; height: 23px; }
.telegram { background: #159bd1; }
.twitter { background: #03a9f4; }
.facebook { background: #4267b2; }
.vk { background: #4a76a8; }
.ok { background: #ee8208; }

/* Footer */
.footer { border-top: 1px solid #e3e5e8; padding: 60px 0 57px; }
.footer-grid { display: grid; grid-template-columns: 34% 17% 17% 1fr auto; }
.footer-grid ul { display: grid; align-content: start; gap: 13px; line-height: 22px; }
.tagline { margin-top: 30px; }
.social { display: flex; align-items: start; gap: 10px; }
.social .round { width: 30px; height: 30px; }
.social svg { width: 14px; height: 14px; }
.fb-blue { background: #2d88ff; }
.vk-blue { background: #2787f5; }
.insta { background: #d93382; }
.tg-blue { background: #29a0d5; }
.footer-bottom { display: flex; justify-content: space-between; margin-top: 28px; }
.legal { display: flex; gap: 25px; }
```
